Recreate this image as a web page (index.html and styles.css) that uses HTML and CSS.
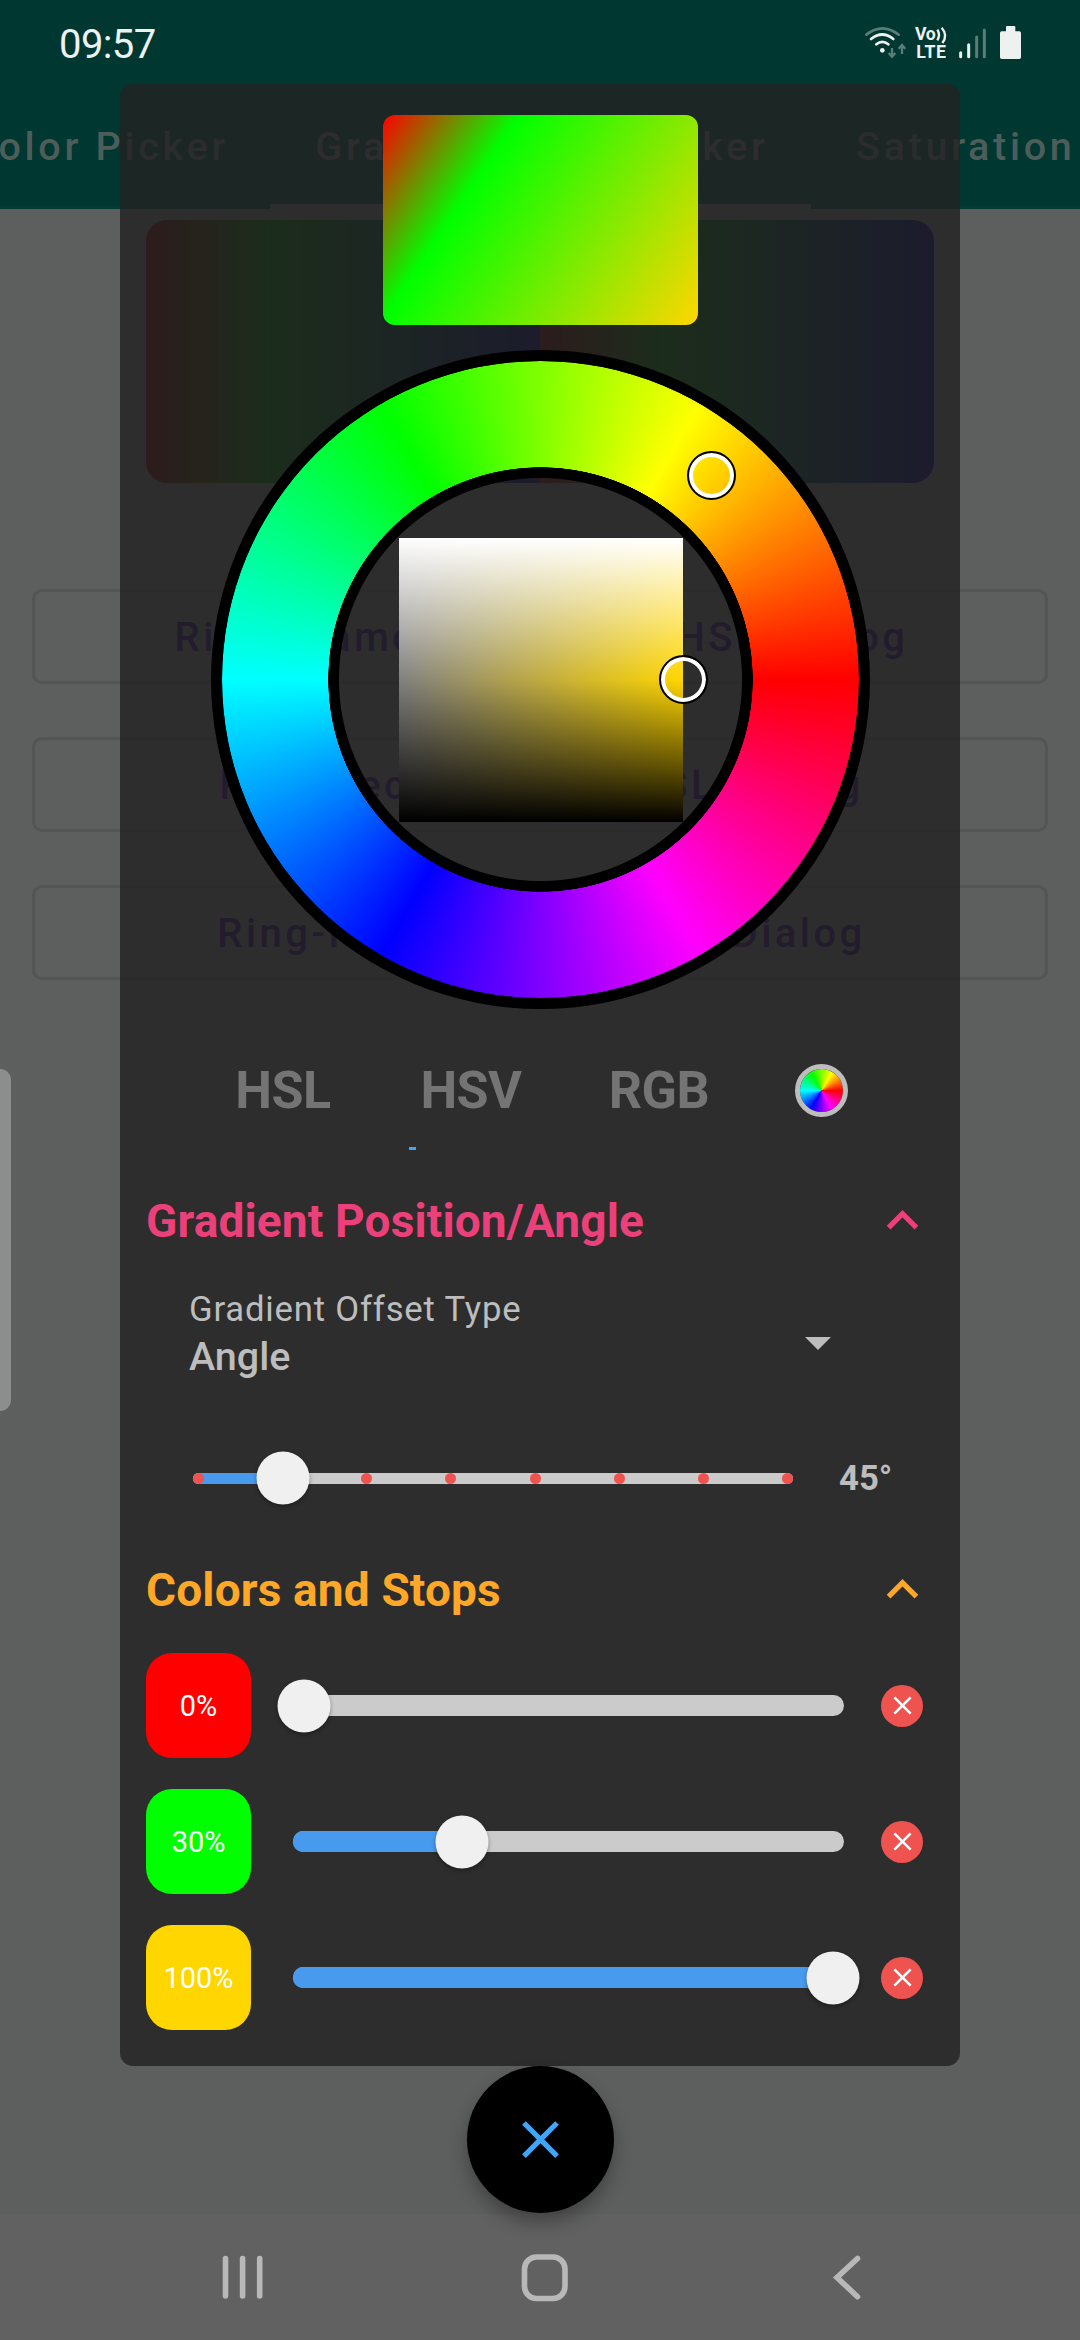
FILE: index.html
```html
<!DOCTYPE html>
<html lang="en">
<head>
<meta charset="utf-8">
<title>Gradient Color Picker</title>
<link rel="stylesheet" href="styles.css">
</head>
<body>
<div class="screen">
  <div class="app">
    <header class="app-bar">
      <div class="status-bar">
        <span class="clock">09:57</span>
        <svg class="status-icons" viewBox="0 0 570 210">
          <g fill="none" stroke-linecap="round" stroke-width="8">
            <path d="M49 74Q97 36 146 74" stroke="#5a7d77"/>
            <path d="M63 87Q97 60 130 87" stroke="#edf1f0"/>
            <path d="M79 103Q97 88 115 103" stroke="#edf1f0"/>
          </g>
          <circle cx="97" cy="121" r="7" fill="#edf1f0"/>
          <path d="M126 114v24M116 129l10 11 10-11M156 132v-24M146 116l10-11 10 11" fill="none" stroke="#5a7d77" stroke-width="7"/>
          <g class="volte" fill="#edf1f0">
            <text x="195" y="91" textLength="62">Vo</text>
            <text x="199" y="144" textLength="89">LTE</text>
          </g>
          <path d="M262 59q10 15 0 32M275 53q20 23 2 46" fill="none" stroke="#edf1f0" stroke-width="7"/>
          <g stroke-width="9" stroke-linecap="round">
            <path d="M332 128v12M356 104v36" stroke="#edf1f0"/>
            <path d="M380 81v59M403 60v80" stroke="#5a7d77"/>
          </g>
          <path d="M468 64V51q0-3 3-3h22q3 0 3 3v13h12q5 0 5 5v73q0 5-5 5h-53q-5 0-5-5v-73q0-5 5-5z" fill="#edf1f0"/>
        </svg>
      </div>
      <nav class="tabs">
        <span class="tab tab-left">Color Picker</span>
        <span class="tab tab-active">Gradient Color Picker</span>
        <span class="tab tab-right">Saturation</span>
      </nav>
    </header>
    <div class="gradient-card"><i></i><i></i></div>
    <div class="buttons">
      <div class="button">Ring-Diamond Gradient HSL Dialog</div>
      <div class="button">Ring-Rect Gradient HSL Dialog</div>
      <div class="button">Ring-Rect Gradient HSV Dialog</div>
    </div>
    <div class="edge-handle"></div>
    <div class="nav-bar">
      <svg class="nav-icons" viewBox="0 0 1080 126">
        <g fill="none" stroke="#b8b8b8" stroke-width="5.6" stroke-linecap="round">
          <path d="M225.5 44.500v37.500M242.600 44.500v37.500M259.700 44.500v37.500"/>
          <rect x="524.500" y="43" width="40.500" height="41.500" rx="12"/>
          <path d="M857.500 44.500L837 63.500l20.500 19.200"/>
        </g>
      </svg>
    </div>
  </div>

  <div class="overlay">
    <section class="dialog">
      <div class="preview"></div>
      <div class="wheel">
        <div class="wheel-outline"></div>
        <div class="wheel-hue"></div>
        <div class="shade"></div>
        <i class="selector selector-hue"></i>
        <i class="selector selector-shade"></i>
      </div>
      <div class="modes">
        <span class="mode">HSL</span>
        <span class="mode">HSV</span>
        <span class="mode">RGB</span>
        <span class="mode mode-wheel"></span>
      </div>
      <div class="mode-indicator"></div>

      <h2 class="heading heading-pink">
        <span class="heading-text">Gradient Position/Angle</span>
        <svg class="chevron" viewBox="0 0 24 24"><path d="M12 8l-6 6 1.410 1.410L12 10.830l4.590 4.580L18 14z"/></svg>
      </h2>
      <div class="select">
        <div class="select-text">
          <span class="select-label">Gradient Offset Type</span>
          <span class="select-value">Angle</span>
        </div>
        <svg class="arrow" viewBox="0 0 26 13"><path d="M0 0h26L13 13z"/></svg>
      </div>
      <div class="angle-row">
        <div class="angle-track">
          <div class="angle-fill"></div>
          <i class="tick"></i><i class="tick"></i><i class="tick"></i><i class="tick"></i><i class="tick"></i><i class="tick"></i><i class="tick"></i><i class="tick"></i>
          <i class="thumb" style="left:14.930%"></i>
        </div>
        <span class="angle-value">45°</span>
      </div>

      <h2 class="heading heading-orange">
        <span class="heading-text">Colors and Stops</span>
        <svg class="chevron" viewBox="0 0 24 24"><path d="M12 8l-6 6 1.410 1.410L12 10.830l4.590 4.580L18 14z"/></svg>
      </h2>
      <div class="stops">
        <div class="stop">
          <div class="swatch" style="background:#ff0000">0%</div>
          <div class="track"><i class="thumb" style="left:2%"></i></div>
          <div class="remove"><svg viewBox="0 0 24 24"><path d="M19 6.410L17.590 5 12 10.590 6.410 5 5 6.410 10.590 12 5 17.590 6.410 19 12 13.410 17.590 19 19 17.590 13.410 12z"/></svg></div>
        </div>
        <div class="stop">
          <div class="swatch" style="background:#00ff00">30%</div>
          <div class="track"><div class="fill" style="width:30.650%"></div><i class="thumb" style="left:30.650%"></i></div>
          <div class="remove"><svg viewBox="0 0 24 24"><path d="M19 6.410L17.590 5 12 10.590 6.410 5 5 6.410 10.590 12 5 17.590 6.410 19 12 13.410 17.590 19 19 17.590 13.410 12z"/></svg></div>
        </div>
        <div class="stop">
          <div class="swatch" style="background:#ffd600">100%</div>
          <div class="track"><div class="fill" style="width:98%"></div><i class="thumb" style="left:98%"></i></div>
          <div class="remove"><svg viewBox="0 0 24 24"><path d="M19 6.410L17.590 5 12 10.590 6.410 5 5 6.410 10.590 12 5 17.590 6.410 19 12 13.410 17.590 19 19 17.590 13.410 12z"/></svg></div>
        </div>
      </div>
    </section>
    <div class="fab"><svg viewBox="0 0 24 24"><path d="M19 6.410L17.590 5 12 10.590 6.410 5 5 6.410 10.590 12 5 17.590 6.410 19 12 13.410 17.590 19 19 17.590 13.410 12z"/></svg></div>
  </div>
</div>
</body>
</html>
```
FILE: styles.css
```css
* { box-sizing: border-box; }
body { margin: 0; font-family: Roboto, sans-serif; }
i { display: block; font-style: normal; }
svg { display: block; }

.screen {
  position: relative;
  width: 1080px;
  height: 2340px;
  overflow: hidden;
}

/* dimmed app behind the dialog */
.app {
  display: flex;
  flex-direction: column;
  height: 2340px;
  background: #5d5f5e;
}
.app-bar {
  height: 209px;
  background: #003731;
  border-bottom: 3px solid #043c36;
}
.status-bar {
  display: flex;
  justify-content: space-between;
  height: 84px;
  padding: 0 40px 0 59px;
}
.clock { font-size: 40px; line-height: 90px; letter-spacing: -0.6px; color: #edf1f0; }
.status-icons { width: 190px; height: 70px; margin-top: 10px; }
.volte { font-size: 53px; font-weight: 700; }
.tabs {
  display: grid;
  grid-template-columns: 270px 541px 269px;
  height: 125px;
}
.tab {
  display: flex;
  align-items: center;
  height: 125px;
  white-space: nowrap;
  font-size: 39.5px;
  font-weight: 500;
  letter-spacing: 3.7px;
  color: #4d5e5a;
}
.tab-left { justify-content: flex-end; padding-right: 41px; overflow: hidden; }
.tab-active {
  justify-content: center;
  border-bottom: 5px solid #5d5f5e;
  padding: 5px 0 0 3px;
  color: #5d5f5e;
}
.tab-right { padding-left: 45px; }

.gradient-card {
  display: flex;
  height: 263px;
  margin: 11px 146px 0;
  border-radius: 21px;
  overflow: hidden;
}
.gradient-card i {
  flex: 1;
  background: linear-gradient(90deg, #5d0000, #005d00 31%, #00005d);
}
.buttons {
  display: flex;
  flex-direction: column;
  gap: 53px;
  margin: 106px 32px 0;
}
.button {
  height: 95px;
  border: 3px solid #535555;
  border-radius: 10px;
  padding-left: 3px;
  text-align: center;
  font-size: 40px;
  line-height: 91px;
  font-weight: 500;
  letter-spacing: 3.45px;
  color: #26005d;
}
.edge-handle {
  width: 11px;
  height: 342px;
  margin-top: 89px;
  border-radius: 0 11px 11px 0;
  background: #8c8e8d;
}
.nav-bar { height: 126px; margin-top: auto; background: #616161; }
.nav-icons { width: 1080px; height: 126px; }

/* dialog layer */
.overlay {
  position: absolute;
  inset: 0;
  display: flex;
  flex-direction: column;
  align-items: center;
  padding-top: 84px;
}
.dialog {
  width: 840px;
  height: 1982px;
  padding: 31px 26px 0;
  border-radius: 13px;
  background: rgba(34, 34, 34, 0.82);
}
.preview {
  width: 315px;
  height: 210px;
  margin: 0 auto;
  border-radius: 12px;
  background: linear-gradient(123.69deg, #ff0000, #00ff00 30%, #ffd600);
}
.wheel {
  position: relative;
  width: 659px;
  height: 659px;
  margin: 25px auto 0;
}
.wheel-outline, .wheel-hue { position: absolute; border-radius: 50%; }
.wheel-outline {
  inset: 0;
  background: radial-gradient(circle closest-side, transparent 201px, #000 202px);
}
.wheel-hue {
  inset: 11px;
  background: conic-gradient(from 90deg, #f00, #f0f, #00f, #0ff, #0f0, #ff0, #f00);
  -webkit-mask: radial-gradient(circle closest-side, transparent 212px, #000 212.500px);
  mask: radial-gradient(circle closest-side, transparent 212px, #000 212.500px);
}
.shade {
  position: absolute;
  left: 188px;
  top: 188px;
  width: 284px;
  height: 284px;
  background:
    linear-gradient(#fff, rgba(255, 255, 255, 0) 50%, rgba(0, 0, 0, 0) 50%, #000),
    linear-gradient(90deg, #808080, #ffd600);
}
.selector {
  position: absolute;
  width: 49px;
  height: 49px;
  border: 2px solid #000;
  border-radius: 50%;
  box-shadow: inset 0 0 0 4px #fff;
}
.selector-hue { left: 476px; top: 101px; }
.selector-shade { left: 448px; top: 305px; }

.modes {
  display: grid;
  grid-template-columns: 188px 188px 188px 136px;
  align-items: center;
  justify-items: center;
  height: 113px;
  margin-top: 25px;
  padding-left: 43px;
}
.mode { font-size: 52px; font-weight: 700; letter-spacing: -0.5px; color: #747474; }
.mode-wheel {
  width: 53px;
  height: 53px;
  border: 5.500px solid #bdbdbd;
  border-radius: 50%;
  background: conic-gradient(from 90deg, #f00, #f0f, #00f, #0ff, #0f0, #ff0, #f00) content-box;
}
.mode-indicator { width: 7px; height: 3px; margin-left: 263px; background: #42a5f5; }

.heading {
  display: flex;
  align-items: center;
  justify-content: space-between;
  height: 63px;
  margin: 39px 0 0;
  font-size: 46px;
  font-weight: 700;
}
.heading-text { letter-spacing: 0.14px; }
.chevron { width: 63px; height: 63px; fill: currentColor; }
.heading-pink { color: #ec407a; }
.heading-orange { margin-top: 50px; color: #ffa726; }

.select {
  display: flex;
  justify-content: space-between;
  height: 96px;
  margin: 33px 103px 0 43px;
  color: #bdbdbd;
}
.select-text { display: flex; flex-direction: column; }
.select-label { font-size: 34.700px; line-height: 48px; letter-spacing: 0.800px; }
.select-value { font-size: 39.500px; line-height: 48px; font-weight: 500; }
.arrow { width: 26px; height: 13px; margin-top: 52px; fill: #bdbdbd; }

.angle-row {
  display: flex;
  align-items: center;
  height: 60px;
  margin: 67px 0 0 47px;
}
.angle-track {
  position: relative;
  display: flex;
  align-items: center;
  justify-content: space-between;
  width: 600px;
  height: 11px;
  border-radius: 6px;
  background: #cbcbcb;
}
.angle-fill {
  position: absolute;
  width: 90px;
  height: 11px;
  border-radius: 6px 0 0 6px;
  background: #489aee;
}
.tick { position: relative; width: 11px; height: 11px; border-radius: 50%; background: #ef5350; }
.thumb {
  position: absolute;
  top: 50%;
  width: 53px;
  height: 53px;
  border-radius: 50%;
  background: #f0f0f0;
  box-shadow: 0 2px 4px rgba(0, 0, 0, 0.35);
  transform: translate(-50%, -50%);
}
.angle-value { margin-left: 46px; font-size: 34.700px; font-weight: 700; color: #bdbdbd; }

.stops {
  display: flex;
  flex-direction: column;
  gap: 31px;
  margin-top: 32px;
}
.stop { display: flex; align-items: center; height: 105px; }
.swatch {
  width: 105px;
  height: 105px;
  border-radius: 26px;
  text-align: center;
  font-size: 28.900px;
  line-height: 107px;
  color: #fff;
}
.track {
  position: relative;
  width: 551px;
  height: 21px;
  margin-left: 42px;
  border-radius: 11px;
  background: #cbcbcb;
}
.fill { height: 21px; border-radius: 11px 0 0 11px; background: #489aee; }
.remove {
  display: grid;
  place-items: center;
  width: 42px;
  height: 42px;
  margin-left: 37px;
  border-radius: 50%;
  background: #ef5350;
}
.remove svg { width: 31px; height: 31px; fill: #fff; }
.fab {
  display: grid;
  place-items: center;
  width: 147px;
  height: 147px;
  border-radius: 50%;
  background: #000;
  box-shadow: 0 10px 18px rgba(0, 0, 0, 0.3);
}
.fab svg { width: 63px; height: 63px; fill: #42a5f5; }
```
